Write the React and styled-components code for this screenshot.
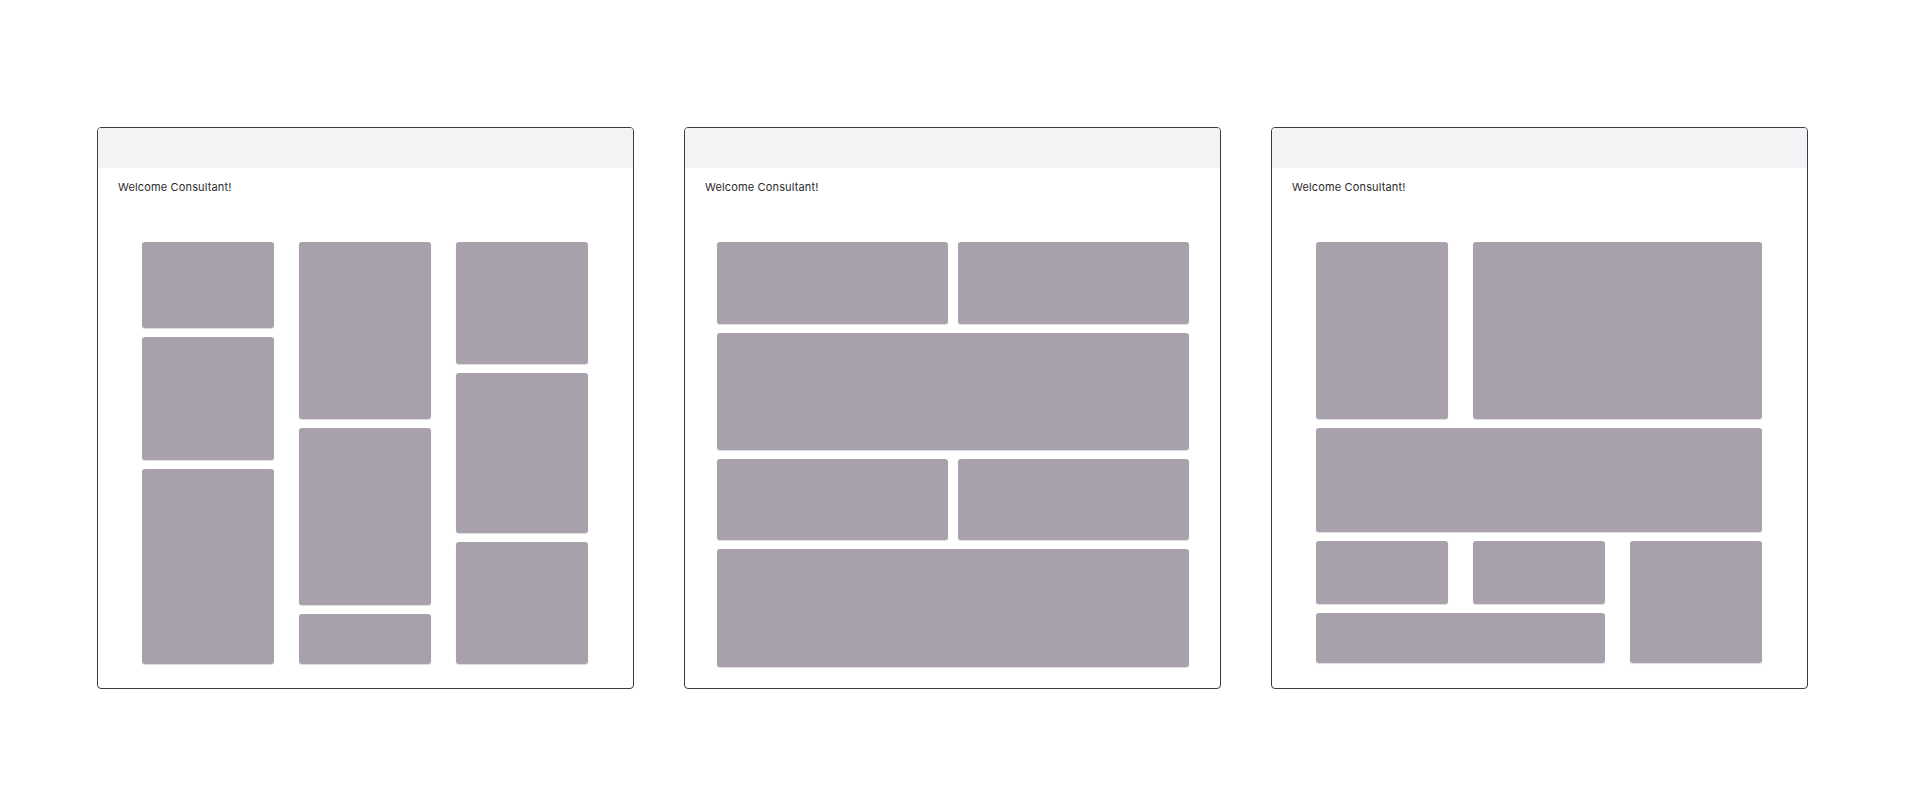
import React from "react";
import styled, { createGlobalStyle } from "styled-components";

const GlobalStyle = createGlobalStyle`
  html, body {
    margin: 0;
    padding: 0;
    background: #ffffff;
  }
  body {
    font-family: Inter, "Noto Sans", Arial, sans-serif;
  }
`;

const Page = styled.div`
  display: flex;
  gap: 50px;
  padding: 127px 0 0 97px;
  height: 796px;
  box-sizing: border-box;
`;

const Screen = styled.section`
  width: 537px;
  height: 562px;
  box-sizing: border-box;
  border: 1px solid #3d3b40;
  border-radius: 4px;
  background: #ffffff;
  overflow: hidden;
  display: flex;
  flex-direction: column;
`;

const TopBar = styled.div`
  height: 40px;
  background: #f3f2f5;
  flex-shrink: 0;
`;

const Greeting = styled.p`
  margin: 12px 0 0 20px;
  font-size: 11px;
  line-height: 14px;
  color: #2b2a2e;
  letter-spacing: 0.15px;
`;

const Board = styled.div`
  margin-top: 48px;
  margin-left: ${({ inset }) => inset}px;
  width: ${({ width }) => width}px;
`;

const Columns = styled.div`
  display: flex;
  gap: 25px;
`;

const Column = styled.div`
  flex: 1;
  display: flex;
  flex-direction: column;
  gap: 9px;
`;

const Grid = styled.div`
  display: grid;
  grid-template-columns: ${({ cols }) => cols};
  grid-template-rows: ${({ rows }) => rows};
  column-gap: ${({ colGap }) => colGap}px;
  row-gap: 9px;
`;

const Tile = styled.div`
  background: #a8a1ab;
  border-radius: 3px;
  box-shadow: 0 1px 1px rgba(60, 50, 65, 0.18);
  height: ${({ h }) => (h ? `${h}px` : "auto")};
  grid-column: ${({ col }) => col || "auto"};
  grid-row: ${({ row }) => row || "auto"};
`;

const masonry = [
  [86, 123, 195],
  [177, 177, 50],
  [122, 160, 122],
];

const App = () => {
  return (
    <>
      <GlobalStyle />
      <Page>
        <Screen>
          <TopBar />
          <Greeting>Welcome Consultant!</Greeting>
          <Board inset={44} width={446}>
            <Columns>
              {masonry.map((col, i) => (
                <Column key={i}>
                  {col.map((h, j) => (
                    <Tile key={j} h={h} />
                  ))}
                </Column>
              ))}
            </Columns>
          </Board>
        </Screen>

        <Screen>
          <TopBar />
          <Greeting>Welcome Consultant!</Greeting>
          <Board inset={32} width={472}>
            <Grid cols="1fr 1fr" rows="82px 117px 81px 118px" colGap={10}>
              <Tile />
              <Tile />
              <Tile col="1 / 3" />
              <Tile />
              <Tile />
              <Tile col="1 / 3" />
            </Grid>
          </Board>
        </Screen>

        <Screen>
          <TopBar />
          <Greeting>Welcome Consultant!</Greeting>
          <Board inset={44} width={446}>
            <Grid cols="1fr 1fr 1fr" rows="177px 104px 63px 50px" colGap={25}>
              <Tile col="1" row="1" />
              <Tile col="2 / 4" row="1" />
              <Tile col="1 / 4" row="2" />
              <Tile col="1" row="3" />
              <Tile col="2" row="3" />
              <Tile col="3" row="3 / 5" />
              <Tile col="1 / 3" row="4" />
            </Grid>
          </Board>
        </Screen>
      </Page>
    </>
  );
};

export default App;
